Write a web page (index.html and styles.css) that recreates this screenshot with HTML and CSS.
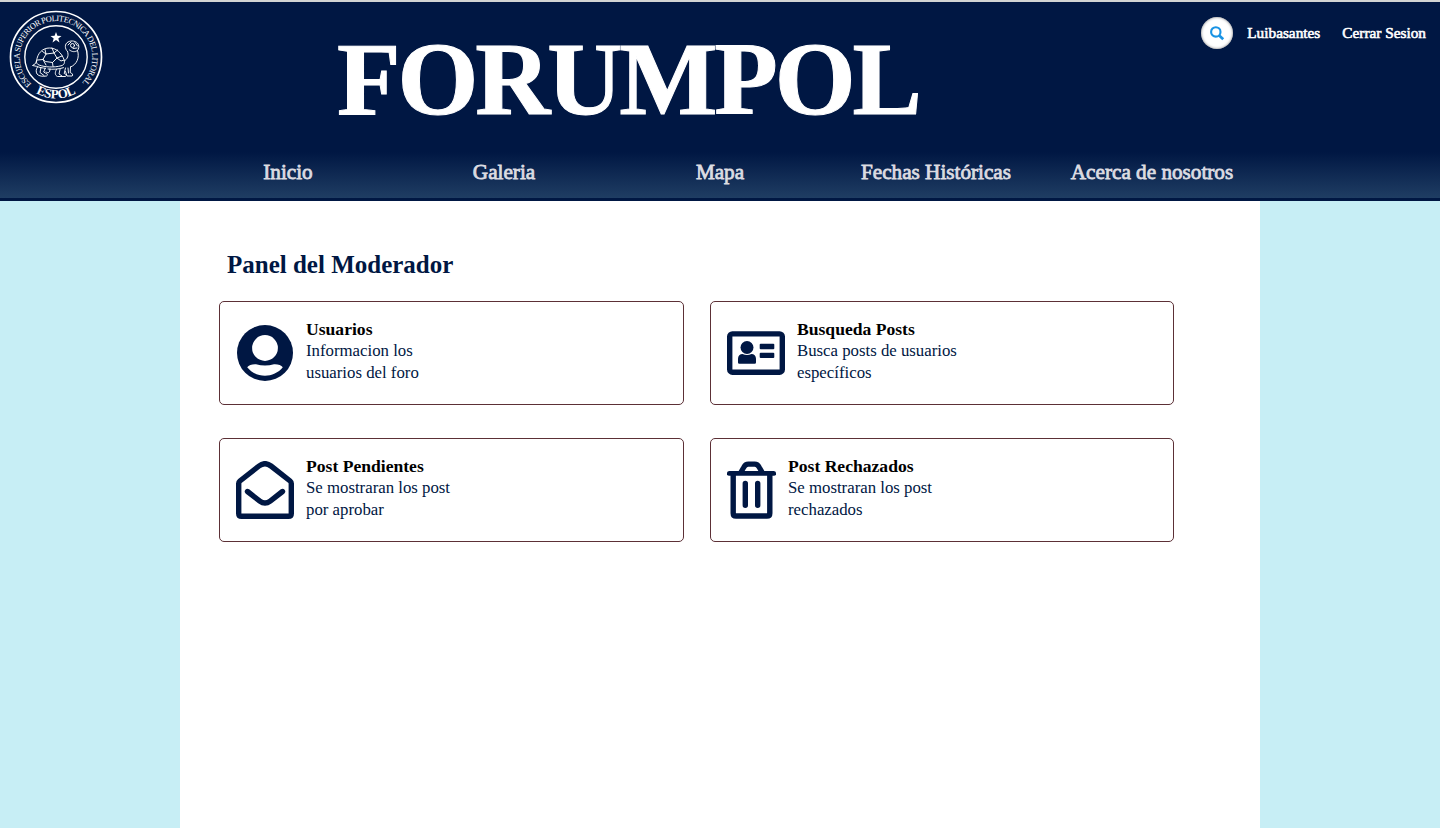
FILE: index.html
```
<!DOCTYPE html>
<html lang="es">
<head>
<meta charset="utf-8">
<title>ForumPol</title>
<link rel="stylesheet" href="styles.css">
</head>
<body>
<header class="header">
  <div class="banner">
    <svg class="logo" viewBox="0 0 94 94" width="94" height="94" fill="none" stroke="#fff">
      <defs>
        <path id="ring" d="M23.300 74.900A36.300 36.300 0 1 1 70.700 74.900"/>
        <path id="base" d="M22 80A41.300 41.300 0 0 0 72 80"/>
      </defs>
      <circle cx="47" cy="47" r="45.500" stroke-width="1.700"/>
      <circle cx="47" cy="47" r="31.200" stroke-width="1.400"/>
      <text class="logo-ring"><textPath href="#ring" textLength="172" startOffset="1">ESCUELA SUPERIOR POLITECNICA DEL LITORAL</textPath></text>
      <text class="logo-base"><textPath href="#base" startOffset="50%" text-anchor="middle" textLength="42">ESPOL</textPath></text>
      <path d="M47 22l1.400 3.800 4.100.1-3.200 2.500 1.200 4-3.500-2.300-3.500 2.300 1.200-4-3.200-2.500 4.100-.1z" fill="#fff" stroke="none"/>
      <g stroke-width=".95" stroke-linejoin="round" stroke-linecap="round">
        <path d="M27.500 51c1-8 6-13 13-13 7 0 12 5 14.500 11.500 1 3 .5 5.500-3 6.300-7 1.800-16 1.500-22-.8-2-.8-2.800-2-2.500-4z"/>
        <path d="M33.500 41.500l3.500 2.500 8-1 3.500-3M37 44l-3 5.500-5.500.5M34 49.500l3 5.500M45 43l3 5-4.500 4.500-7-1-2.500-2M48 48l5-2M43.500 52.500l.5 4M48 48l4 3 3-1M36 39.500l1 4.500M43 38l2 5"/>
        <path d="M27.500 51l-1 2.500-3 2 4 .8c3 1.200 6 1.700 9 2M39 59c5 .6 11 .2 15.500-1.300"/>
        <path d="M58.500 41.500c-3-3-3-7.500.5-9.500 3.500-2 8.500-1 10.200 2.200 1.200 2.600.6 4.600-.7 6.300 2.200 7-.5 14-7 16.500M58.500 41.500c1.500 4 0 7.500-3.200 9.500M68.500 40.500c-2.500 1.800-5.500 1.500-8-.5"/>
        <circle cx="63.500" cy="35.500" r="2"/><path d="M59 35l3-3M66 32.500l2.500 3.500M64 38.500l4-.5"/>
        <path d="M28.500 57c-1.500 2-1.800 4.500-.5 7 2 2.500 6 2.500 9.500 2 1.500-.5 1-2.500-.8-2.800l-2-1.200 1.500-3.700M32 57.500l-1 5 4 3M37 62c2 1.500 4 1 4-3"/>
        <path d="M47.500 59.500c-2 3-1.500 6 1 7h8c1.500-.5.500-2.500-1.300-3l1.300-5.500M51 59.500l-1 4.500 3 2M56.500 61.500l1.500 4.500h5.200c1.300-1-.2-3-2-3.500l.3-5.500M59 58l.5 5"/>
      </g>
    </svg>
    <h1 class="brand">FORUMPOL</h1>
    <div class="account">
      <a class="search"><svg viewBox="0 0 16 16" width="16" height="16" fill="none" stroke="#1993e4"><circle cx="6.800" cy="6.900" r="4.700" stroke-width="2.100"/><path d="M10.200 10.400l4 3.800" stroke-width="2.700"/></svg></a>
      <a class="user">Luibasantes</a>
      <a class="logout">Cerrar Sesion</a>
    </div>
  </div>
  <nav class="nav">
    <a>Inicio</a><a>Galeria</a><a>Mapa</a><a>Fechas Históricas</a><a>Acerca de nosotros</a>
  </nav>
</header>
<main class="page">
  <h2 class="heading">Panel del Moderador</h2>
  <div class="cards">
    <section class="card">
      <svg class="icon" viewBox="0 0 58 58" width="58" height="58"><circle cx="29" cy="29" r="28" fill="#001743"/><circle cx="29" cy="24" r="12.900" fill="#fff"/><path d="M11.200 43.300C12.800 41 16 40 20 40.200c6 1.600 12 1.600 18 0 4-.2 7.200.8 8.800 3.100C38 54.500 20 54.500 11.200 43.300z" fill="#fff"/></svg>
      <div class="info"><h3>Usuarios</h3><p>Informacion los<br>usuarios del foro</p></div>
    </section>
    <section class="card">
      <svg class="icon" viewBox="0 0 58 58" width="58" height="58" fill="#001743"><rect x="2.700" y="9.900" width="52.600" height="38.300" rx="2.700" fill="none" stroke="#001743" stroke-width="5.400"/><circle cx="20" cy="23.500" r="6.500"/><path d="M11 38.500v-3.800c0-3 2-4.700 4.500-4.700 3 1.300 6 1.300 9 0 2.500 0 4.500 1.700 4.500 4.700v3.800q0 1.300-1.300 1.300H12.300q-1.300 0-1.300-1.300z"/><rect x="32.700" y="19.800" width="14.600" height="5.400" rx="1"/><rect x="32.700" y="28.800" width="14.600" height="5.300" rx="1"/></svg>
      <div class="info"><h3>Busqueda Posts</h3><p>Busca posts de usuarios<br>específicos</p></div>
    </section>
    <section class="card">
      <svg class="icon" viewBox="0 0 58 58" width="58" height="58" fill="none" stroke="#001743" stroke-width="5.400"><path d="M2.700 22.500q0-1.500 1.200-2.500L23 5q6-4.600 12 0l19.100 15q1.200 1 1.200 2.500v30q0 2.800-2.800 2.800h-47q-2.800 0-2.800-2.800z"/><path d="M11.500 30.500l12.300 9.600q5.200 3.900 10.400 0l12.300-9.600" stroke-linecap="round" stroke-width="5.400"/></svg>
      <div class="info"><h3>Post Pendientes</h3><p>Se mostraran los post<br>por aprobar</p></div>
    </section>
    <section class="card">
      <svg class="icon" viewBox="0 0 49 58" width="49" height="58" fill="none" stroke="#001743"><path d="M13.200 12.500l3.600-6.300q1.600-3 4.500-3h6.400q2.900 0 4.500 3l3.600 6.300" stroke-width="5.200"/><path d="M2.300 12.400h44.400" stroke-width="4.800" stroke-linecap="round"/><path d="M6.200 13v39.200q0 2.800 2.800 2.800h31q2.800 0 2.800-2.800V13" stroke-width="5.400"/><path d="M18.300 22.500v21.800M30.700 22.500v21.800" stroke-width="5.400" stroke-linecap="round"/></svg>
      <div class="info"><h3>Post Rechazados</h3><p>Se mostraran los post<br>rechazados</p></div>
    </section>
  </div>
</main>
</body>
</html>
```
FILE: styles.css
```
* { box-sizing: border-box; }
body {
  margin: 0;
  height: 828px;
  overflow: hidden;
  display: flex;
  flex-direction: column;
  background: #c7eef5;
  font-family: "Liberation Serif", serif;
  color: #001743;
}
h1, h2, h3, p { margin: 0; }
.header {
  flex: none;
  height: 201px;
  border-top: 2px solid #d2d4d3;
  border-bottom: 3px solid #001743;
  background: linear-gradient(#001743 150px, #1f3d63 196px);
}
.banner { height: 146px; display: flex; align-items: flex-start; }
.logo { margin: 8px 0 0 9px; flex: none; }
.logo-ring { font-size: 8.4px; fill: #fff; stroke: none; }
.logo-base { font-size: 13px; font-weight: bold; fill: #fff; stroke: none; }
.brand {
  margin: 18px 0 0 234px;
  width: 640px;
  font-size: 104px;
  line-height: 118px;
  letter-spacing: -3.1px;
  color: #fff;
  -webkit-text-stroke: 1px #fff;
  white-space: nowrap;
}
.account {
  flex: 1;
  display: flex;
  align-items: center;
  justify-content: flex-end;
  margin-top: 15px;
  padding-right: 14px;
  color: #fff;
  font-size: 15.3px;
  -webkit-text-stroke: .6px #fff;
}
.search {
  width: 32px;
  height: 32px;
  border-radius: 50%;
  background: #fff;
  box-shadow: inset 0 0 3px #777;
  display: flex;
  align-items: center;
  justify-content: center;
}
.user { margin: 0 22px 0 14px; }
.nav {
  width: 1080px;
  margin: 0 auto;
  display: grid;
  grid-template-columns: repeat(5, 1fr);
  text-align: center;
  line-height: 48px;
  font-size: 21.2px;
  color: #dcdce2;
  -webkit-text-stroke: .8px #dcdce2;
}
.page {
  flex: 1;
  width: 1080px;
  margin: 0 auto;
  padding: 48px 39px 0;
  background: #fff;
}
.heading { margin-left: 8px; font-size: 25px; line-height: 32px; }
.cards {
  margin-top: 20px;
  display: grid;
  grid-template-columns: 465px 464px;
  grid-auto-rows: 104px;
  gap: 33px 26px;
}
.card {
  display: flex;
  align-items: flex-start;
  padding: 16px;
  border: 1px solid #5c3036;
  border-radius: 5px;
}
.icon { flex: none; margin: 6px 12px 0 0; }
.info h3 { font-size: 17.6px; line-height: 22px; color: #000; }
.info p { font-size: 16.8px; line-height: 22px; }
```
